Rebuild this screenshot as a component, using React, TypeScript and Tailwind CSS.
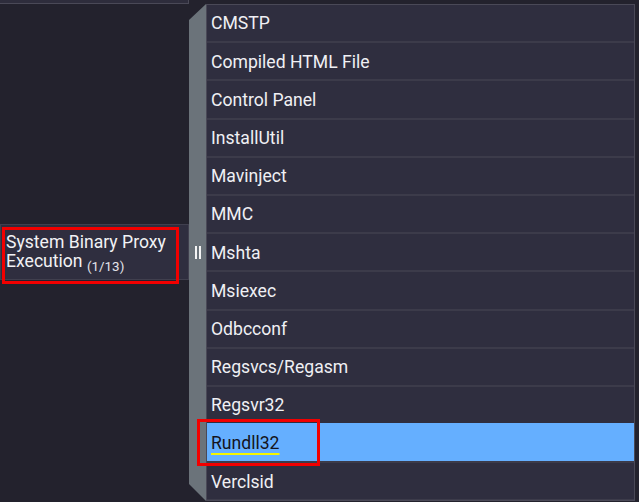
import React from "react";

const items = [
  "CMSTP",
  "Compiled HTML File",
  "Control Panel",
  "InstallUtil",
  "Mavinject",
  "MMC",
  "Mshta",
  "Msiexec",
  "Odbcconf",
  "Regsvcs/Regasm",
  "Regsvr32",
  "Rundll32",
  "Verclsid",
];

export default function App() {
  return (
    <div
      className="w-[639px] h-[502px] bg-[#23222d] flex overflow-hidden"
      style={{ fontFamily: "Roboto, 'Noto Sans', sans-serif" }}
    >
      {/* left column */}
      <div className="w-[189px] flex flex-col relative">
        <div className="h-[4px] w-[189px] bg-[#2e2d3c] border-b border-r border-[#4a4957]" />
        <div className="mt-[220px] w-[189px] h-[56px] bg-[#2f2e3f] border border-[#403f4e] pl-[5px] pt-[8px] text-[#f2f2f5] text-[17.6px] leading-[19px]">
          System Binary Proxy
          <br />
          Execution{" "}
          <span className="text-[13.4px] text-[#e4e4ea] align-[-4px]">(1/13)</span>
        </div>
        <div className="absolute left-[2px] top-[227px] w-[177px] h-[57px] border-[3px] border-[#f20000]" />
      </div>

      {/* gray bar */}
      <div className="mt-[4px] w-[17px] h-[497px] bg-[#6b737a] flex items-center justify-center gap-[2px] [clip-path:polygon(100%_0,100%_100%,0_calc(100%-17px),0_16px)]">
        <div className="w-[2px] h-[13px] bg-[#f4f4f4]" />
        <div className="w-[2px] h-[13px] bg-[#f4f4f4]" />
      </div>

      {/* list */}
      <div className="relative mt-[4px] w-[429px] h-[497px] border border-[#4a4957] bg-[#3c3b4a] flex flex-col">
        {items.map((it, i) => {
          const sel = it === "Rundll32";
          return (
            <div
              key={it}
              className={
                (i > 0 ? "border-t-2 " : "") +
                (sel
                  ? "bg-[#65afff] border-[#65afff] text-[#14141c] "
                  : "bg-[#2f2e3f] border-[#3c3b4a] text-[#f0f0f4] ") +
                "h-[38.2px] shrink-0 flex items-center pl-[4px] pt-[1px] text-[17.6px]"
              }
              style={i === 0 ? { height: "36.2px" } : undefined}
            >
              {sel ? (
                <span className="underline decoration-[#f5f500] decoration-2 underline-offset-[4px]">
                  {it}
                </span>
              ) : (
                it
              )}
            </div>
          );
        })}
        <div className="absolute left-[-10px] top-[414px] w-[123px] h-[47px] border-[3px] border-[#f20000]" />
      </div>
    </div>
  );
}
